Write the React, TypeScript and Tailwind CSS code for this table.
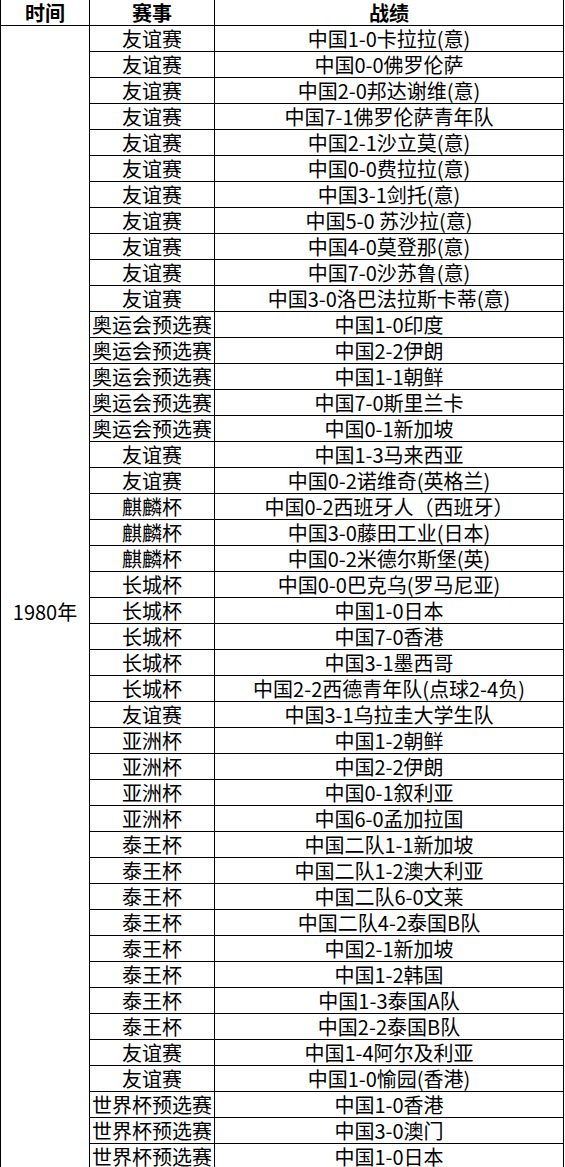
const rows: [string, string][] = [
  ["友谊赛", "中国1-0卡拉拉(意)"],
  ["友谊赛", "中国0-0佛罗伦萨"],
  ["友谊赛", "中国2-0邦达谢维(意)"],
  ["友谊赛", "中国7-1佛罗伦萨青年队"],
  ["友谊赛", "中国2-1沙立莫(意)"],
  ["友谊赛", "中国0-0费拉拉(意)"],
  ["友谊赛", "中国3-1剑托(意)"],
  ["友谊赛", "中国5-0 苏沙拉(意)"],
  ["友谊赛", "中国4-0莫登那(意)"],
  ["友谊赛", "中国7-0沙苏鲁(意)"],
  ["友谊赛", "中国3-0洛巴法拉斯卡蒂(意)"],
  ["奥运会预选赛", "中国1-0印度"],
  ["奥运会预选赛", "中国2-2伊朗"],
  ["奥运会预选赛", "中国1-1朝鲜"],
  ["奥运会预选赛", "中国7-0斯里兰卡"],
  ["奥运会预选赛", "中国0-1新加坡"],
  ["友谊赛", "中国1-3马来西亚"],
  ["友谊赛", "中国0-2诺维奇(英格兰)"],
  ["麒麟杯", "中国0-2西班牙人（西班牙）"],
  ["麒麟杯", "中国3-0藤田工业(日本)"],
  ["麒麟杯", "中国0-2米德尔斯堡(英)"],
  ["长城杯", "中国0-0巴克乌(罗马尼亚)"],
  ["长城杯", "中国1-0日本"],
  ["长城杯", "中国7-0香港"],
  ["长城杯", "中国3-1墨西哥"],
  ["长城杯", "中国2-2西德青年队(点球2-4负)"],
  ["友谊赛", "中国3-1乌拉圭大学生队"],
  ["亚洲杯", "中国1-2朝鲜"],
  ["亚洲杯", "中国2-2伊朗"],
  ["亚洲杯", "中国0-1叙利亚"],
  ["亚洲杯", "中国6-0孟加拉国"],
  ["泰王杯", "中国二队1-1新加坡"],
  ["泰王杯", "中国二队1-2澳大利亚"],
  ["泰王杯", "中国二队6-0文莱"],
  ["泰王杯", "中国二队4-2泰国B队"],
  ["泰王杯", "中国2-1新加坡"],
  ["泰王杯", "中国1-2韩国"],
  ["泰王杯", "中国1-3泰国A队"],
  ["泰王杯", "中国2-2泰国B队"],
  ["友谊赛", "中国1-4阿尔及利亚"],
  ["友谊赛", "中国1-0愉园(香港)"],
  ["世界杯预选赛", "中国1-0香港"],
  ["世界杯预选赛", "中国3-0澳门"],
  ["世界杯预选赛", "中国1-0日本"],
]

// 26px row pitch: 1px top pad + 24px line + 1px bottom border
const cell = "h-[26px] px-0 pt-[1px] pb-0 text-center align-middle whitespace-nowrap border-r border-b border-black"

export default function App() {
  return (
    <div className="min-h-screen bg-white text-black font-['Noto_Sans_CJK_SC',sans-serif] text-[20px] leading-[24px]">
      <table className="table-fixed border-separate border-spacing-0 w-[564px]">
        <colgroup>
          <col className="w-[90px]" />
          <col className="w-[125px]" />
          <col className="w-[349px]" />
        </colgroup>
        <thead>
          <tr>
            <th className={`${cell} border-l font-bold`}>时间</th>
            <th className={`${cell} font-bold`}>赛事</th>
            <th className={`${cell} font-bold`}>战绩</th>
          </tr>
        </thead>
        <tbody>
          {rows.map(([event, result], i) => (
            <tr key={i}>
              {i === 0 && (
                <td rowSpan={rows.length} className={`${cell} border-l pt-[28px]`}>
                  1980年
                </td>
              )}
              <td className={cell}>{event}</td>
              <td className={cell}>{result}</td>
            </tr>
          ))}
        </tbody>
      </table>
    </div>
  )
}
